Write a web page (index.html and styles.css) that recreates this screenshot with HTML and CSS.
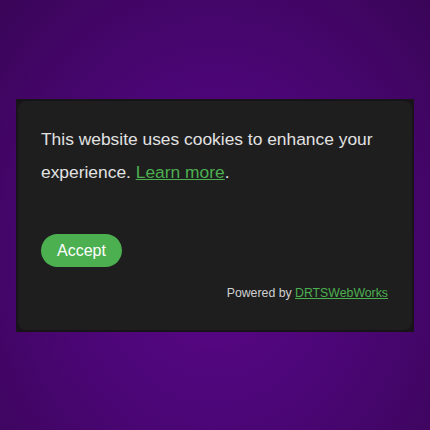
FILE: index.html
```html
<!DOCTYPE html>
<html lang="en">
<head>
<meta charset="utf-8">
<title>Cookie consent</title>
<link rel="stylesheet" href="styles.css">
</head>
<body>
  <div class="frame">
    <div class="card">
      <p class="message">This website uses cookies to enhance your experience. <a href="#" class="link">Learn more</a>.</p>
      <button class="accept" type="button">Accept</button>
      <div class="powered">Powered by <a href="#" class="link">DRTSWebWorks</a></div>
    </div>
  </div>
</body>
</html>
```

FILE: styles.css
```css
html, body {
  margin: 0;
  height: 100%;
}
body {
  display: flex;
  align-items: center;
  justify-content: center;
  background: radial-gradient(ellipse at 50% 60%, #5a0688 0%, #4c0677 45%, #3a0558 100%);
  font-family: "Liberation Sans", Arial, sans-serif;
}
.frame {
  width: 394px;
  padding: 2px;
  background: #181219;
}
.card {
  background: #1e1e1e;
  border-radius: 8px;
  padding: 22px 24px 29px 23px;
  display: flex;
  flex-direction: column;
  align-items: flex-start;
}
.message {
  margin: 0 0 44px;
  color: #e2e2e2;
  font-size: 17.4px;
  line-height: 33.5px;
}
.link {
  color: #4caf50;
  text-decoration: underline;
}
.accept {
  background: #4caf50;
  color: #ffffff;
  border: none;
  border-radius: 17px;
  font-family: "Liberation Sans", Arial, sans-serif;
  font-size: 16px;
  line-height: 17px;
  padding: 8px 16px;
}
.powered {
  align-self: flex-end;
  margin-top: 18px;
  color: #d0d0d0;
  font-size: 12.3px;
  line-height: 16px;
}
```
